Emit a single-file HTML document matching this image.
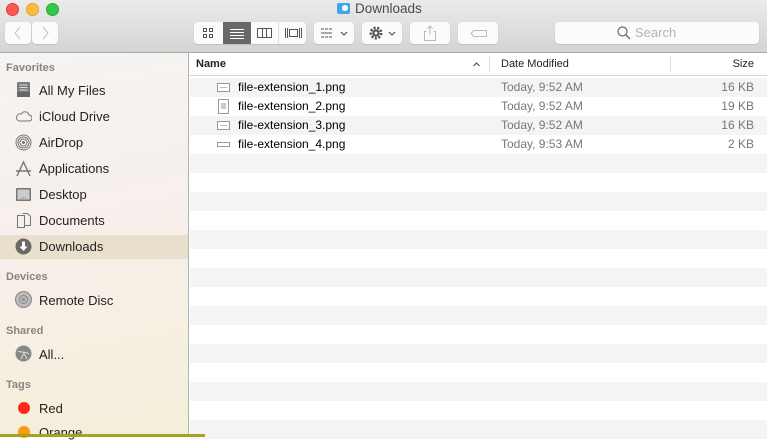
<!DOCTYPE html>
<html><head><style>
*{margin:0;padding:0;box-sizing:border-box}
body{width:767px;height:437px;overflow:hidden;font-family:"Liberation Sans",sans-serif;position:relative;background:#fff}
.tb{position:absolute;left:0;top:0;width:767px;height:53px;background:linear-gradient(#ebebeb,#d4d4d4);border-bottom:1px solid #a9a9a9}
.dot{position:absolute;top:3px;width:13px;height:13px;border-radius:50%}
.btn{position:absolute;top:22px;height:22px;background:#fbfbfb;border-radius:4px;box-shadow:0 0.5px 1px rgba(0,0,0,.2)}
.title{position:absolute;top:1px;left:338px;font-size:13.5px;color:#4a4a4a}
.side{position:absolute;left:0;top:53px;width:189px;height:384px;background:linear-gradient(170deg,#f5f4f2 0%,#f7efeb 45%,#f4efd9 100%);border-right:1px solid #b4b4b4}
.sh{position:absolute;left:6px;font-size:11px;font-weight:bold;color:#8a8580}
.si{position:absolute;left:39px;font-size:13px;color:#222}
.ic{position:absolute;left:15px;width:17px;height:17px}
.main{position:absolute;left:190px;top:53px;width:577px;height:384px}
.hdr{position:absolute;top:0;left:0;width:577px;height:23px;border-bottom:1px solid #d7d7d7;font-size:11px;color:#222;background:#fff}
.row{position:absolute;left:0;width:577px;height:19px;font-size:12px;line-height:19px}
.g{background:#f4f4f4}
</style></head><body>
<div class="tb">
<div class="dot" style="left:6px;background:#fc5753;border:0.5px solid #de3f3b"></div>
<div class="dot" style="left:26px;background:#fdbc40;border:0.5px solid #dea12c"></div>
<div class="dot" style="left:46px;background:#34c84a;border:0.5px solid #27aa35"></div>
<div style="position:absolute;left:337px;top:3px;width:13px;height:11px;background:#3fa9e8;border-radius:2px"></div>
<div style="position:absolute;left:342px;top:5px;width:6px;height:6px;background:#fff;border-radius:50%"></div>
<div class="title" style="left:355px">Downloads</div>
<div class="btn" style="left:5px;width:26px"><svg width="26" height="22"><path d="M15 5l-5 6 5 6" stroke="#c4c4c4" fill="none"/></svg></div>
<div class="btn" style="left:32px;width:26px"><svg width="26" height="22"><path d="M11 5l5 6-5 6" stroke="#c4c4c4" fill="none"/></svg></div>
<div class="btn" style="left:194px;width:112px;overflow:hidden">
 <div style="position:absolute;left:9px;top:6px;width:10px;height:10px;font-size:0">
  <svg width="10" height="10"><rect x="0.5" y="0.5" width="3" height="3" fill="none" stroke="#555"/><rect x="6.5" y="0.5" width="3" height="3" fill="none" stroke="#555"/><rect x="0.5" y="6.5" width="3" height="3" fill="none" stroke="#555"/><rect x="6.5" y="6.5" width="3" height="3" fill="none" stroke="#555"/></svg></div>
 <div style="position:absolute;left:29px;top:0;width:28px;height:22px;background:#686868">
  <svg width="28" height="22"><path d="M7 7.5h14M7 10.5h14M7 13.5h14M7 16.5h14" stroke="#fff"/></svg></div>
 <svg style="position:absolute;left:57px;top:0" width="55" height="22"><rect x="6.5" y="6.5" width="14" height="9" fill="none" stroke="#555"/><path d="M11.5 6.5v9M15.5 6.5v9" stroke="#555"/><path d="M27.5 0v22" stroke="#ddd"/><path d="M34.5 6v10M36.5 6v10M48.5 6v10M50.5 6v10" stroke="#555"/><rect x="38.5" y="7.5" width="8" height="7" fill="none" stroke="#555"/></svg>
</div>
<div class="btn" style="left:314px;width:40px"><svg width="40" height="22"><path d="M7 7h3M11 7h3M15 7h3M7 11h11M7 15h3M11 15h3M15 15h3" stroke="#555"/><path d="M27 10l3 3 3-3" stroke="#444" fill="none"/></svg></div>
<div class="btn" style="left:362px;width:40px"><svg width="40" height="22"><circle cx="14" cy="11" r="5" fill="none" stroke="#555" stroke-width="3" stroke-dasharray="2 1.5"/><circle cx="14" cy="11" r="3.5" fill="#555"/><circle cx="14" cy="11" r="1.5" fill="#fbfbfb"/><path d="M27 10l3 3 3-3" stroke="#444" fill="none"/></svg></div>
<div class="btn" style="left:410px;width:40px"><svg width="40" height="22"><path d="M16.5 9.5h-2v9h11v-9h-2M20 4v9M17.5 6.5L20 4l2.5 2.5" stroke="#bbb" fill="none"/></svg></div>
<div class="btn" style="left:458px;width:40px"><svg width="40" height="22"><path d="M16 8.5h12.5v6H16l-3-3z" stroke="#bbb" fill="none"/></svg></div>
<div class="btn" style="left:555px;width:204px"><svg style="position:absolute;left:62px;top:4px" width="14" height="14"><circle cx="5.5" cy="5.5" r="4.5" fill="none" stroke="#666" stroke-width="1.2"/><path d="M9 9l4 4" stroke="#666" stroke-width="1.3"/></svg><span style="position:absolute;left:80px;top:3px;font-size:13px;color:#b4b4b4">Search</span></div>
</div>

<div class="side">
<div class="sh" style="top:9px">Favorites</div>
<svg class="ic" style="top:28px" viewBox="0 0 17 17"><rect x="2" y="1" width="13" height="15" rx="1.5" fill="#7c7c7c"/><path d="M4.5 4h8M4.5 6.5h8M4.5 9h8" stroke="#ddd"/><rect x="2" y="11" width="13" height="5" fill="#666"/></svg>
<div class="si" style="top:30px">All My Files</div>
<svg class="ic" style="top:55px" viewBox="0 0 17 17"><path d="M4 13h10a3 3 0 0 0 0-6 4 4 0 0 0-7.5-1A3.5 3.5 0 0 0 4 13z" fill="none" stroke="#777"/></svg>
<div class="si" style="top:56px">iCloud Drive</div>
<svg class="ic" style="top:81px" viewBox="0 0 17 17"><circle cx="8.5" cy="8.5" r="7.5" fill="none" stroke="#777"/><circle cx="8.5" cy="8.5" r="5.5" fill="none" stroke="#777"/><circle cx="8.5" cy="8.5" r="3.5" fill="none" stroke="#777"/><circle cx="8.5" cy="8.5" r="1.5" fill="#777"/></svg>
<div class="si" style="top:82px">AirDrop</div>
<svg class="ic" style="top:107px" viewBox="0 0 17 17"><path d="M2 16L8.5 2 15 16M1 11h15" stroke="#777" stroke-width="1.4" fill="none"/></svg>
<div class="si" style="top:108px">Applications</div>
<svg class="ic" style="top:133px" viewBox="0 0 17 17"><rect x="1" y="2" width="15" height="13" rx="1" fill="#777"/><rect x="2.5" y="3.5" width="12" height="10" fill="#ccc"/><path d="M6 12h5" stroke="#777" stroke-dasharray="1 1"/></svg>
<div class="si" style="top:134px">Desktop</div>
<svg class="ic" style="top:159px" viewBox="0 0 17 17"><path d="M2.5 3.5h7v12h-7zM7.5 1.5h5l3 3v9h-6" fill="#f4f2f0" stroke="#777"/></svg>
<div class="si" style="top:160px">Documents</div>
<div style="position:absolute;left:0;top:182px;width:188px;height:24px;background:#e9dfcd"></div>
<svg class="ic" style="top:185px" viewBox="0 0 17 17"><circle cx="8.5" cy="8.5" r="8" fill="#6d6864"/><path d="M7 3.5h3v5h2.5L8.5 13 4.5 8.5H7z" fill="#fff"/></svg>
<div class="si" style="top:186px">Downloads</div>
<div class="sh" style="top:218px">Devices</div>
<svg class="ic" style="top:238px" viewBox="0 0 17 17"><circle cx="8.5" cy="8.5" r="8" fill="#bbb" stroke="#888"/><circle cx="8.5" cy="8.5" r="4" fill="none" stroke="#888"/><circle cx="8.5" cy="8.5" r="1.5" fill="#888"/></svg>
<div class="si" style="top:240px">Remote Disc</div>
<div class="sh" style="top:272px">Shared</div>
<svg class="ic" style="top:292px" viewBox="0 0 17 17"><circle cx="8.5" cy="8.5" r="8" fill="#888"/><path d="M3 6c3 2 8 0 11 3M6 14l3-6 3 6" stroke="#ddd" fill="none"/></svg>
<div class="si" style="top:294px">All...</div>
<div class="sh" style="top:326px">Tags</div>
<div style="position:absolute;left:18px;top:349px;width:12px;height:12px;border-radius:50%;background:#fc2a1c"></div>
<div class="si" style="top:348px">Red</div>
<div style="position:absolute;left:18px;top:373px;width:12px;height:12px;border-radius:50%;background:#fb9a0f"></div>
<div class="si" style="top:372px">Orange</div>
</div>

<div class="main">
<div class="hdr">
 <span style="position:absolute;left:6px;top:5px;font-weight:bold">Name</span>
 <svg style="position:absolute;left:283px;top:9px" width="7" height="5"><path d="M0.5 4L3.5 1 6.5 4" stroke="#444" fill="none"/></svg>
 <div style="position:absolute;left:299px;top:3px;width:1px;height:16px;background:#ddd"></div>
 <span style="position:absolute;left:311px;top:5px">Date Modified</span>
 <div style="position:absolute;left:480px;top:3px;width:1px;height:16px;background:#ddd"></div>
 <span style="position:absolute;right:13px;top:5px">Size</span>
</div>
<div class="row g" style="top:25px"><svg style="position:absolute;left:27px;top:5px" width="13" height="10"><rect x="0.5" y="0.5" width="12" height="8" fill="#fff" stroke="#999"/><path d="M3 4.5h7" stroke="#bbb"/></svg><span style="position:absolute;left:48px">file-extension_1.png</span><span style="position:absolute;left:311px;color:#777">Today, 9:52 AM</span><span style="position:absolute;right:13px;color:#777">16 KB</span></div>
<div class="row" style="top:44px"><svg style="position:absolute;left:28px;top:2px" width="11" height="15"><rect x="0.5" y="0.5" width="10" height="14" fill="#fff" stroke="#999"/><rect x="3" y="4" width="5" height="6" fill="#ccc"/></svg><span style="position:absolute;left:48px">file-extension_2.png</span><span style="position:absolute;left:311px;color:#777">Today, 9:52 AM</span><span style="position:absolute;right:13px;color:#777">19 KB</span></div>
<div class="row g" style="top:63px"><svg style="position:absolute;left:27px;top:5px" width="13" height="10"><rect x="0.5" y="0.5" width="12" height="8" fill="#fff" stroke="#999"/><path d="M3 4.5h7" stroke="#bbb"/></svg><span style="position:absolute;left:48px">file-extension_3.png</span><span style="position:absolute;left:311px;color:#777">Today, 9:52 AM</span><span style="position:absolute;right:13px;color:#777">16 KB</span></div>
<div class="row" style="top:82px"><svg style="position:absolute;left:27px;top:7px" width="13" height="5"><rect x="0.5" y="0.5" width="12" height="4" fill="#fff" stroke="#999"/></svg><span style="position:absolute;left:48px">file-extension_4.png</span><span style="position:absolute;left:311px;color:#777">Today, 9:53 AM</span><span style="position:absolute;right:13px;color:#777">2 KB</span></div>
<div class="row g" style="top:101px"></div>
<div class="row g" style="top:139px"></div>
<div class="row g" style="top:177px"></div>
<div class="row g" style="top:215px"></div>
<div class="row g" style="top:253px"></div>
<div class="row g" style="top:291px"></div>
<div class="row g" style="top:329px"></div>
<div class="row g" style="top:367px"></div>
</div>
<div style="position:absolute;left:0;top:434px;width:205px;height:3px;background:#a7a225"></div>
</body></html>
